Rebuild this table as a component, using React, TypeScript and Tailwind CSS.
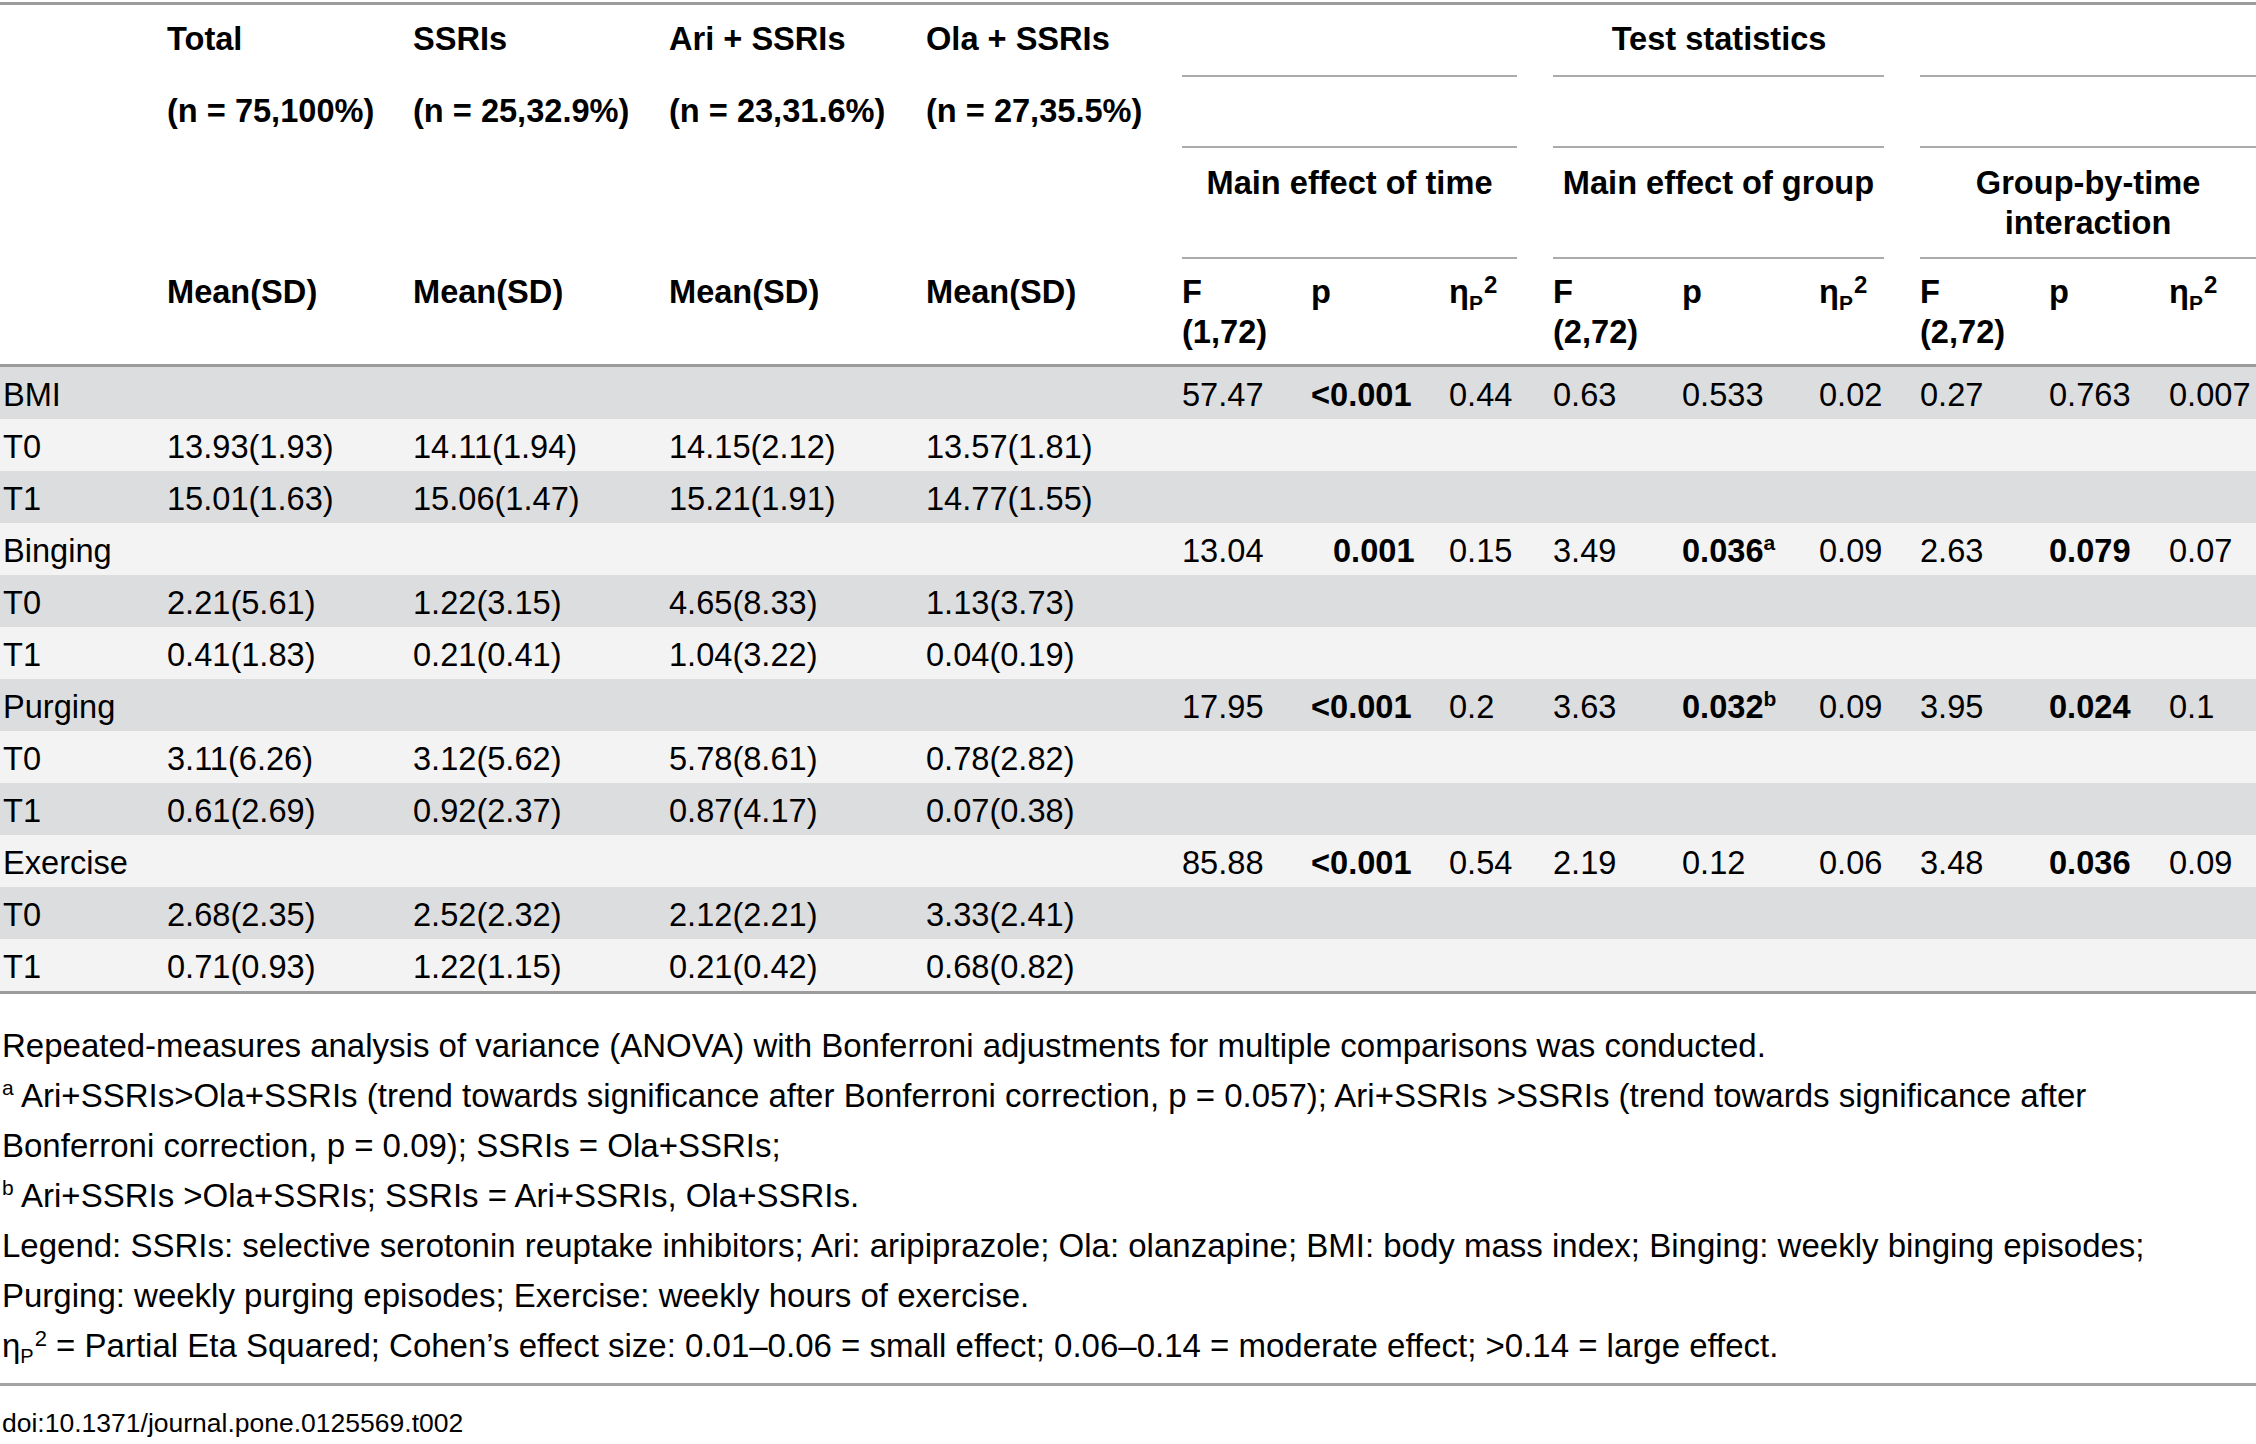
import React from "react";

type S = { t: string; b?: boolean; sup?: string; ind?: boolean };
type Row = { label: string; means?: string[]; stats?: S[] };

const rows: Row[] = [
  {
    label: "BMI",
    stats: [
      { t: "57.47" }, { t: "<0.001", b: true }, { t: "0.44" },
      { t: "0.63" }, { t: "0.533" }, { t: "0.02" },
      { t: "0.27" }, { t: "0.763" }, { t: "0.007" },
    ],
  },
  { label: "T0", means: ["13.93(1.93)", "14.11(1.94)", "14.15(2.12)", "13.57(1.81)"] },
  { label: "T1", means: ["15.01(1.63)", "15.06(1.47)", "15.21(1.91)", "14.77(1.55)"] },
  {
    label: "Binging",
    stats: [
      { t: "13.04" }, { t: "0.001", b: true, ind: true }, { t: "0.15" },
      { t: "3.49" }, { t: "0.036", b: true, sup: "a" }, { t: "0.09" },
      { t: "2.63" }, { t: "0.079", b: true }, { t: "0.07" },
    ],
  },
  { label: "T0", means: ["2.21(5.61)", "1.22(3.15)", "4.65(8.33)", "1.13(3.73)"] },
  { label: "T1", means: ["0.41(1.83)", "0.21(0.41)", "1.04(3.22)", "0.04(0.19)"] },
  {
    label: "Purging",
    stats: [
      { t: "17.95" }, { t: "<0.001", b: true }, { t: "0.2" },
      { t: "3.63" }, { t: "0.032", b: true, sup: "b" }, { t: "0.09" },
      { t: "3.95" }, { t: "0.024", b: true }, { t: "0.1" },
    ],
  },
  { label: "T0", means: ["3.11(6.26)", "3.12(5.62)", "5.78(8.61)", "0.78(2.82)"] },
  { label: "T1", means: ["0.61(2.69)", "0.92(2.37)", "0.87(4.17)", "0.07(0.38)"] },
  {
    label: "Exercise",
    stats: [
      { t: "85.88" }, { t: "<0.001", b: true }, { t: "0.54" },
      { t: "2.19" }, { t: "0.12" }, { t: "0.06" },
      { t: "3.48" }, { t: "0.036", b: true }, { t: "0.09" },
    ],
  },
  { label: "T0", means: ["2.68(2.35)", "2.52(2.32)", "2.12(2.21)", "3.33(2.41)"] },
  { label: "T1", means: ["0.71(0.93)", "1.22(1.15)", "0.21(0.42)", "0.68(0.82)"] },
];

const th = "align-top text-left font-bold whitespace-nowrap leading-[40px] p-0";
const td = "align-top text-left whitespace-nowrap pt-[4px] pb-0 pr-0 leading-[48px]";

function EtaHead() {
  return (
    <span>
      η<sub className="text-[21px] -bottom-[7px]">P</sub>
      <sup className="text-[24px] -top-[10px] pl-[1px]">2</sup>
    </span>
  );
}

function GroupLine() {
  return <div className="h-[73px] border-y-2 border-[#ababab]" />;
}

export default function App() {
  return (
    <div className="w-[2256px] bg-white pt-[2px] text-black font-[family-name:'Liberation_Sans',Arial,Helvetica,sans-serif]">
      <div className="border-y-[3px] border-[#9c9c9c]">
        <table className="w-[2256px] table-fixed border-separate border-spacing-0 text-[32.6px]">
          <colgroup>
            <col className="w-[131px]" />
            <col className="w-[246px]" />
            <col className="w-[256px]" />
            <col className="w-[257px]" />
            <col className="w-[256px]" />
            <col className="w-[129px]" />
            <col className="w-[138px]" />
            <col className="w-[104px]" />
            <col className="w-[129px]" />
            <col className="w-[137px]" />
            <col className="w-[101px]" />
            <col className="w-[129px]" />
            <col className="w-[120px]" />
            <col className="w-[123px]" />
          </colgroup>
          <thead>
            <tr className="h-[70px]">
              <th className={`${th} pt-[14px]`}></th>
              <th className={`${th} pt-[14px] pl-[36px]`}>Total</th>
              <th className={`${th} pt-[14px] pl-[36px]`}>SSRIs</th>
              <th className={`${th} pt-[14px] pl-[36px]`}>Ari + SSRIs</th>
              <th className={`${th} pt-[14px] pl-[36px]`}>Ola + SSRIs</th>
              <th colSpan={9} className={`${th} pt-[14px] pl-[36px] text-center`}>
                <div className="text-center">Test statistics</div>
              </th>
            </tr>
            <tr className="h-[73px]">
              <th className={`${th} pt-[16px]`}></th>
              <th className={`${th} pt-[16px] pl-[36px]`}>(n = 75,100%)</th>
              <th className={`${th} pt-[16px] pl-[36px]`}>(n = 25,32.9%)</th>
              <th className={`${th} pt-[16px] pl-[36px]`}>(n = 23,31.6%)</th>
              <th className={`${th} pt-[16px] pl-[36px]`}>(n = 27,35.5%)</th>
              <th colSpan={3} className={`${th} pl-[36px]`}>
                <GroupLine />
              </th>
              <th colSpan={3} className={`${th} pl-[36px]`}>
                <GroupLine />
              </th>
              <th colSpan={3} className={`${th} pl-[36px]`}>
                <GroupLine />
              </th>
            </tr>
            <tr className="h-[111px]">
              <th className={th}></th>
              <th className={th}></th>
              <th className={th}></th>
              <th className={th}></th>
              <th className={th}></th>
              <th colSpan={3} className={`${th} pl-[36px]`}>
                <div className="h-[111px] border-b-2 border-[#ababab] pt-[15px] text-center">
                  Main effect of time
                </div>
              </th>
              <th colSpan={3} className={`${th} pl-[36px]`}>
                <div className="h-[111px] border-b-2 border-[#ababab] pt-[15px] text-center">
                  Main effect of group
                </div>
              </th>
              <th colSpan={3} className={`${th} pl-[36px]`}>
                <div className="h-[111px] border-b-2 border-[#ababab] pt-[15px] text-center">
                  Group-by-time
                  <br />
                  interaction
                </div>
              </th>
            </tr>
            <tr className="h-[108px]">
              <th className={`${th} pt-[13px] border-b-[3px] border-[#9c9c9c]`}></th>
              <th className={`${th} pt-[13px] pl-[36px] border-b-[3px] border-[#9c9c9c]`}>Mean(SD)</th>
              <th className={`${th} pt-[13px] pl-[36px] border-b-[3px] border-[#9c9c9c]`}>Mean(SD)</th>
              <th className={`${th} pt-[13px] pl-[36px] border-b-[3px] border-[#9c9c9c]`}>Mean(SD)</th>
              <th className={`${th} pt-[13px] pl-[36px] border-b-[3px] border-[#9c9c9c]`}>Mean(SD)</th>
              <th className={`${th} pt-[13px] pl-[36px] border-b-[3px] border-[#9c9c9c]`}>
                F<br />(1,72)
              </th>
              <th className={`${th} pt-[13px] pl-[36px] border-b-[3px] border-[#9c9c9c]`}>p</th>
              <th className={`${th} pt-[13px] pl-[36px] border-b-[3px] border-[#9c9c9c]`}>
                <EtaHead />
              </th>
              <th className={`${th} pt-[13px] pl-[36px] border-b-[3px] border-[#9c9c9c]`}>
                F<br />(2,72)
              </th>
              <th className={`${th} pt-[13px] pl-[36px] border-b-[3px] border-[#9c9c9c]`}>p</th>
              <th className={`${th} pt-[13px] pl-[36px] border-b-[3px] border-[#9c9c9c]`}>
                <EtaHead />
              </th>
              <th className={`${th} pt-[13px] pl-[36px] border-b-[3px] border-[#9c9c9c]`}>
                F<br />(2,72)
              </th>
              <th className={`${th} pt-[13px] pl-[36px] border-b-[3px] border-[#9c9c9c]`}>p</th>
              <th className={`${th} pt-[13px] pl-[36px] border-b-[3px] border-[#9c9c9c]`}>
                <EtaHead />
              </th>
            </tr>
          </thead>
          <tbody>
            {rows.map((r, i) => (
              <tr key={i} className={`h-[52px] ${i % 2 === 0 ? "bg-[#dcdddf]" : "bg-[#f3f3f3]"}`}>
                <td className={`${td} pl-[3px]`}>{r.label}</td>
                {[0, 1, 2, 3].map((k) => (
                  <td key={k} className={`${td} pl-[36px]`}>
                    {r.means ? r.means[k] : ""}
                  </td>
                ))}
                {Array.from({ length: 9 }).map((_, k) => {
                  const s = r.stats ? r.stats[k] : undefined;
                  return (
                    <td key={k} className={`${td} pl-[36px]`}>
                      {s ? (
                        <span className={`${s.b ? "font-bold" : ""} ${s.ind ? "pl-[22px]" : ""}`}>
                          {s.t}
                          {s.sup ? <sup className="text-[21px] -top-[12px]">{s.sup}</sup> : null}
                        </span>
                      ) : null}
                    </td>
                  );
                })}
              </tr>
            ))}
          </tbody>
        </table>
      </div>

      <div className="mt-[27px] w-[2200px] pl-[2px] text-[33px] leading-[50px]">
        <p>
          Repeated-measures analysis of variance (ANOVA) with Bonferroni adjustments for multiple
          comparisons was conducted.
        </p>
        <p>
          <sup className="text-[21px] -top-[12px]">a</sup> Ari+SSRIs&gt;Ola+SSRIs (trend towards
          significance after Bonferroni correction, p = 0.057); Ari+SSRIs &gt;SSRIs (trend towards
          significance after Bonferroni correction, p = 0.09); SSRIs = Ola+SSRIs;
        </p>
        <p>
          <sup className="text-[21px] -top-[12px]">b</sup> Ari+SSRIs &gt;Ola+SSRIs; SSRIs =
          Ari+SSRIs, Ola+SSRIs.
        </p>
        <p>
          Legend: SSRIs: selective serotonin reuptake inhibitors; Ari: aripiprazole; Ola:
          olanzapine; BMI: body mass index; Binging: weekly binging episodes; Purging: weekly
          purging episodes; Exercise: weekly hours of exercise.
        </p>
        <p>
          η<sub className="text-[20px] -bottom-[6px]">P</sub>
          <sup className="text-[22px] -top-[11px] pl-[1px]">2</sup> = Partial Eta Squared; Cohen’s
          effect size: 0.01–0.06 = small effect; 0.06–0.14 = moderate effect; &gt;0.14 = large
          effect.
        </p>
      </div>

      <div className="mt-[12px] border-t-[3px] border-[#a3a3a3] pt-[17px] pl-[2px] text-[26.5px] leading-[40px]">
        doi:10.1371/journal.pone.0125569.t002
      </div>
    </div>
  );
}
